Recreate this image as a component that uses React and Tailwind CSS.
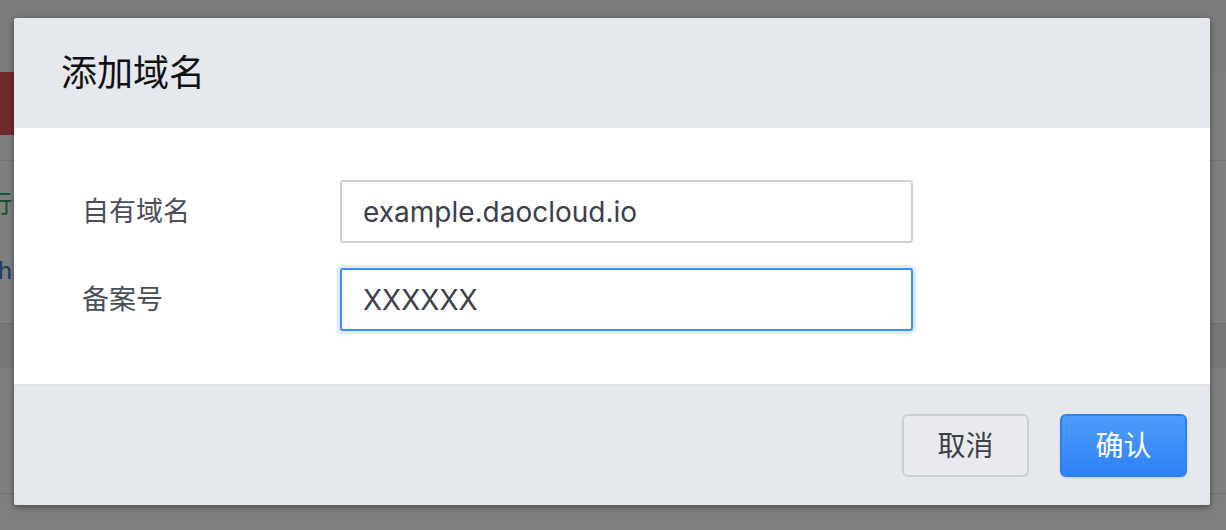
import React from 'react';

const cjk = "font-['Inter','Noto_Sans_CJK_SC',sans-serif]";

// page behind the overlay — only its left/right slivers show
function BackdropPage() {
  return (
    <div className="flex h-full w-full flex-col bg-white">
      <div className="h-[72px] bg-[#f7f7f7]" />
      <div className="flex h-[63px]">
        <div className="w-[40px] bg-[#dc5555]" />
      </div>
      <div className="h-[25px]" />
      <div className="h-px bg-[#e5e5e5]" />
      <div className="flex h-[162px] flex-col pt-[30px]">
        <span className="-ml-[12px] text-[24px] leading-[26px] text-[#2f9e55]">行</span>
        <span className="mt-[40px] -ml-[2px] text-[24px] leading-[28px] text-[#3a76c9]">h</span>
      </div>
      <div className="h-px bg-[#dcdcdc]" />
      <div className="h-[44px] bg-[#eef0f2]" />
      <div className="h-[125px] bg-white" />
      <div className="h-px bg-[#dcdcdc]" />
      <div className="flex-1 bg-white" />
    </div>
  );
}

function Field({ label, value, focused }) {
  return (
    <div className="flex items-center">
      <label className="block w-[326px] shrink-0 pl-[68px] text-[27px] leading-none text-[#4a4f57]">{label}</label>
      <input
        readOnly
        value={value}
        className={
          focused
            ? 'h-[63px] w-[573px] rounded-[3px] border-2 border-[#3b8ef5] bg-white px-[21px] text-[28px] text-[#3c4049] outline-none ring-[3px] ring-[#dcebfd]'
            : 'h-[63px] w-[573px] rounded-[3px] border-2 border-[#cdd0d6] bg-white px-[21px] text-[28px] text-[#3c4049] outline-none'
        }
      />
    </div>
  );
}

export default function App() {
  return (
    <div className={`relative h-[530px] w-[1226px] overflow-hidden ${cjk}`}>
      <BackdropPage />
      <div className="absolute inset-0 bg-black/50" />
      <div className="absolute inset-0 pl-[14px] pt-[18px]">
        <div className="flex w-[1196px] flex-col overflow-hidden rounded-[2px] shadow-[0_2px_6px_rgba(0,0,0,0.45)]">
          <div className="flex h-[110px] items-center bg-[#e5e8ed] pl-[47px]">
            <h1 className="text-[36px] font-normal leading-none text-[#111]">添加域名</h1>
          </div>
          <div className="flex h-[256px] flex-col gap-[25px] bg-white pt-[52px]">
            <Field label="自有域名" value="example.daocloud.io" />
            <Field label="备案号" value="XXXXXX" focused />
          </div>
          <div className="flex h-[121px] items-start justify-end gap-[31px] border-t-2 border-[#dfe1e5] bg-[#e5e8ed] pr-[23px] pt-[28px]">
            <button className="h-[63px] w-[127px] rounded-[6px] border-2 border-[#cbced3] bg-[#e8eaee] text-[28px] text-[#3c4049]">
              取消
            </button>
            <button className="h-[63px] w-[127px] rounded-[6px] border-2 border-[#2d80f2] bg-gradient-to-b from-[#4c9bfc] to-[#2f82f5] text-[28px] text-white shadow-[0_1px_2px_rgba(0,0,0,0.15)]">
              确认
            </button>
          </div>
        </div>
      </div>
    </div>
  );
}
